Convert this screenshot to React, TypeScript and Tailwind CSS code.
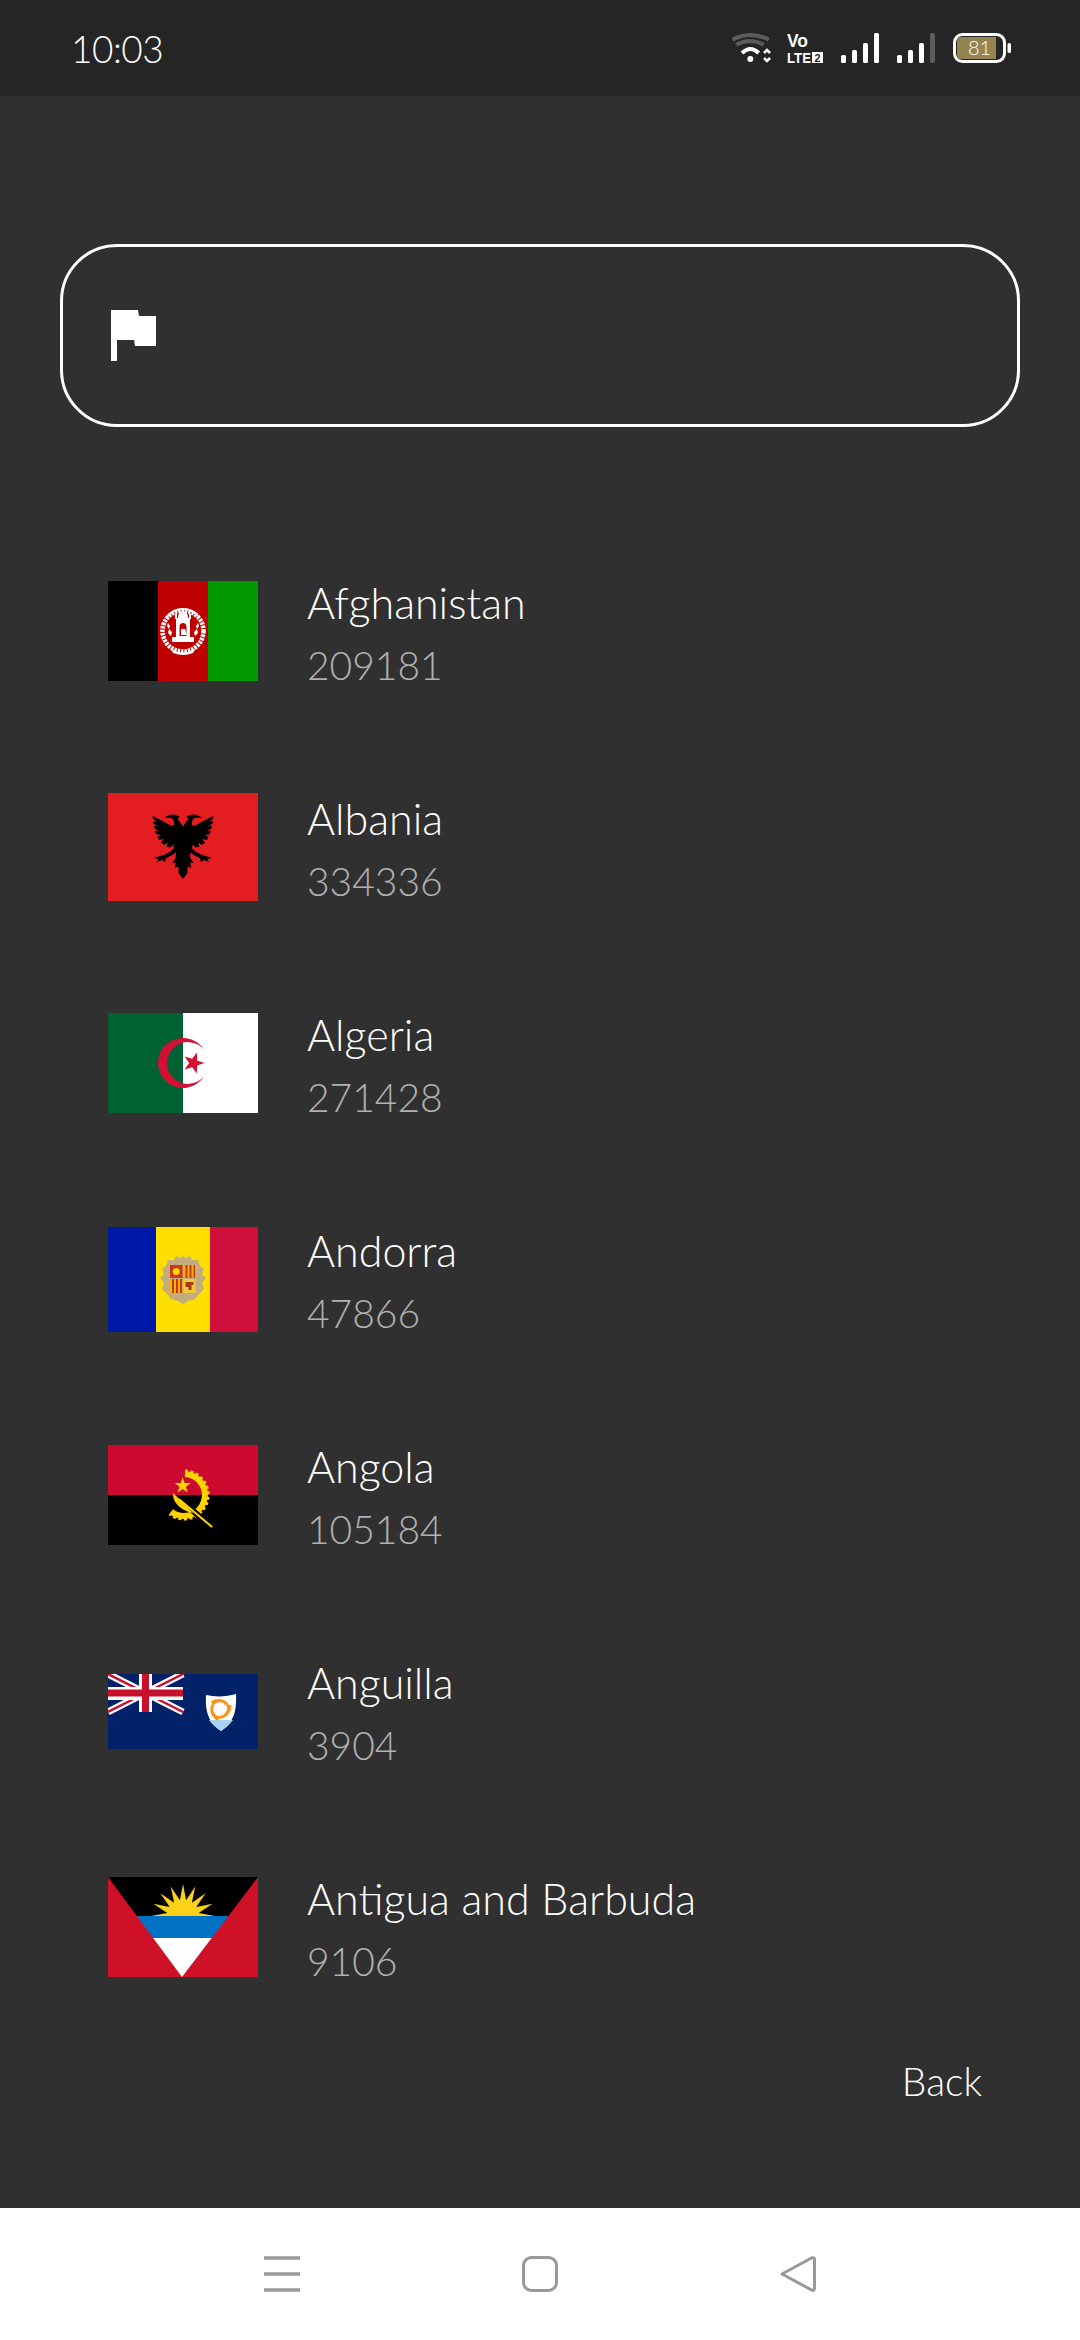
import type { ReactNode } from "react";

function starPoints(cx: number, cy: number, outer: number, inner: number, count: number, start = -90) {
  const pts: string[] = [];
  for (let i = 0; i < count * 2; i++) {
    const r = i % 2 === 0 ? outer : inner;
    const a = ((start + (i * 180) / count) * Math.PI) / 180;
    pts.push(`${(cx + r * Math.cos(a)).toFixed(2)},${(cy + r * Math.sin(a)).toFixed(2)}`);
  }
  return pts.join(" ");
}

function FlagSvg({ h, children }: { h: number; children: ReactNode }) {
  return (
    <svg width="150" height={h} viewBox={`0 0 150 ${h}`} className="block shrink-0">
      {children}
    </svg>
  );
}

function Afghanistan() {
  return (
    <FlagSvg h={100}>
      <rect width="50" height="100" fill="#000" />
      <rect x="50" width="50" height="100" fill="#be0000" />
      <rect x="100" width="50" height="100" fill="#009900" />
      {/* wreath */}
      <circle cx="75" cy="50" r="20.500" fill="none" stroke="#fff" strokeWidth="4.500" strokeDasharray="2.500 1" />
      <path d="M59 36A20 20 0 0 1 91 36" fill="none" stroke="#fff" strokeWidth="2" />
      <path d="M63 68Q75 75 87 68L85 72Q75 76 65 72Z" fill="#fff" />
      {/* mosque */}
      <path d="M68 37h14v19h4v5H64v-5h4z" fill="#fff" />
      <path d="M70 37C70 32 73 30 75 30C77 30 80 32 80 37Z" fill="#fff" />
      <path d="M67 33h2v5h-2zM81 33h2v5h-2z" fill="#fff" />
      <path d="M71.500 55V46C71.500 43 73 42 75 42C77 42 78.500 43 78.500 46V55Z" fill="#be0000" />
      <path d="M73 48h4l2 6h-6z" fill="#fff" />
      {/* wheat */}
      <path d="M60 42l2 3-1 3 3 3-1 4-3-3 1-4-2-3zM90 42l-2 3 1 3-3 3 1 4 3-3-1-4 2-3z" fill="#fff" />
    </FlagSvg>
  );
}

const eagleHalf =
  "M114 65C118 55 126 50 130 42L124 36C130 30 145 26 155 30L172 38L155 38C148 38 142 42 142 48L140 60L150 62L175 48L205 33L204 42L190 50L203 47L203 56L188 64L201 62L199 71L185 77L198 77L194 88L180 90L191 96L185 105L172 102L180 113L170 120L160 112L163 126L150 127L143 118L141 130L152 140L172 150L200 158L186 164L195 172L176 165L168 172L165 160L146 150L135 142L136 158L146 175L136 172L138 190L128 184L127 205L114 222Z";

function Albania() {
  return (
    <FlagSvg h={108}>
      <rect width="150" height="108" fill="#e41e20" />
      <g transform="translate(37 12) scale(0.3333)">
        <path d={eagleHalf} fill="#000" />
        <path d={eagleHalf} fill="#000" transform="matrix(-1 0 0 1 228 0)" />
      </g>
    </FlagSvg>
  );
}

function Algeria() {
  return (
    <FlagSvg h={100}>
      <rect width="75" height="100" fill="#006233" />
      <rect x="75" width="75" height="100" fill="#fff" />
      <path d="M96.300 37A25 25 0 1 0 96.300 63A20.900 20.900 0 1 1 96.300 37Z" fill="#d21034" />
      <polygon points={starPoints(85.500, 50, 11, 4.400, 5, 0)} fill="#d21034" />
    </FlagSvg>
  );
}

function Andorra() {
  return (
    <FlagSvg h={105}>
      <rect width="48" height="105" fill="#0018a8" />
      <rect x="48" width="54" height="105" fill="#fedf00" />
      <rect x="102" width="48" height="105" fill="#d0103a" />
      <path
        d="M60 33L66 33L68 29L72 31L75 29L78 31L82 29L84 33L90 33L92 39L96 42L94 47L98 51L94 56L96 62L91 67L87 72L80 74L75 77L70 74L63 72L59 67L54 62L56 56L52 51L56 47L54 42L58 39Z"
        fill="#c4ad7c"
      />
      <rect x="62" y="38" width="12.500" height="13" fill="#d0351f" />
      <circle cx="68.250" cy="44.500" r="3.500" fill="#fedf00" />
      <rect x="75.500" y="38" width="12" height="13" fill="#f2b705" />
      <path d="M77.500 38h2v13h-2zM81.500 38h2v13h-2zM85.500 38h1.500v13H85.500z" fill="#c8321f" />
      <rect x="62" y="52" width="12.500" height="14" fill="#f2b705" />
      <path d="M64 52h2v14h-2zM68 52h2v14h-2zM72 52h2v14h-2z" fill="#c8321f" />
      <rect x="75.500" y="52" width="12" height="14" fill="#f2c93c" />
      <path d="M77.500 55h8v3h-2v5h-3v-3h-3z" fill="#a83a1c" />
    </FlagSvg>
  );
}

function Angola() {
  return (
    <FlagSvg h={100}>
      <rect width="150" height="50" fill="#cc092f" />
      <rect y="50" width="150" height="50" fill="#000" />
      <path d="M77 29A21 21 0 1 1 63.200 66.700" fill="none" stroke="#ffd200" strokeWidth="6" />
      <path d="M77 26A24 24 0 1 1 61.500 69" fill="none" stroke="#ffd200" strokeWidth="3" strokeDasharray="3 2.500" />
      <polygon points={starPoints(74.700, 40.700, 8.500, 3.400, 5)} fill="#ffd200" />
      <path d="M72 55L103 81" stroke="#000" strokeWidth="6" />
      <path d="M65.300 47.700C63.700 55 70.300 65 85.300 68.300L72 54.300C69 52 67 50 65.300 47.700Z" fill="#ffd200" />
      <path d="M72 55L103.500 81.500" stroke="#ffd200" strokeWidth="2" strokeLinecap="round" />
    </FlagSvg>
  );
}

const dolphin = "M-9 -8C-2 -12 6 -10 9 -4L5 -5C1 -8 -4 -7 -6 -4L-6 0Z";

function Anguilla() {
  return (
    <FlagSvg h={75}>
      <rect width="150" height="75" fill="#012169" />
      <path d="M0 0L75 38M75 0L0 38" stroke="#fff" strokeWidth="7" />
      <path d="M0 0L37.500 19M75 38L37.500 19M75 0L37.500 19M0 38L37.500 19" stroke="#c8102e" strokeWidth="2.500" />
      <path d="M31 0h13v38H31zM0 13h75v13H0z" fill="#fff" />
      <path d="M34 0h7v38h-7zM0 15.500h75v7H0z" fill="#c8102e" />
      <path d="M98 21C107 23 118 23 128 20C128.500 33 128 47 113 57C98 47 97.500 33 98 21Z" fill="#fff" />
      <path d="M101 46H125C122 50 118 54 113 57C108 54 104 50 101 46Z" fill="#a8d3ee" />
      <g transform="translate(112 35)" fill="#f7941d">
        <path d={dolphin} />
        <path d={dolphin} transform="rotate(120)" />
        <path d={dolphin} transform="rotate(240)" />
      </g>
    </FlagSvg>
  );
}

function Antigua() {
  return (
    <FlagSvg h={100}>
      <rect width="150" height="100" fill="#ce1126" />
      <clipPath id="antigua-v">
        <polygon points="0,0 150,0 74,100" />
      </clipPath>
      <g clipPath="url(#antigua-v)">
        <rect width="150" height="39" fill="#000" />
        <clipPath id="antigua-sun">
          <rect width="150" height="39" />
        </clipPath>
        <polygon clipPath="url(#antigua-sun)" points={starPoints(75, 39, 32, 16, 16, 0)} fill="#fcd116" />
        <rect y="39" width="150" height="22" fill="#0072c6" />
        <rect y="61" width="150" height="39" fill="#fff" />
      </g>
    </FlagSvg>
  );
}

const countries = [
  { name: "Afghanistan", count: "209181", flag: <Afghanistan /> },
  { name: "Albania", count: "334336", flag: <Albania /> },
  { name: "Algeria", count: "271428", flag: <Algeria /> },
  { name: "Andorra", count: "47866", flag: <Andorra /> },
  { name: "Angola", count: "105184", flag: <Angola /> },
  { name: "Anguilla", count: "3904", flag: <Anguilla /> },
  { name: "Antigua and Barbuda", count: "9106", flag: <Antigua /> },
];

function StatusIcons() {
  return (
    <div className="flex items-center">
      {/* wifi */}
      <svg width="42" height="30" viewBox="0 0 42 30" className="block">
        <path d="M0.700 6.700Q18.300 -2.700 36.700 6.700" fill="none" stroke="#5c5c5c" strokeWidth="4" />
        <path d="M4.300 11.700Q18.300 4.300 31.700 11.700" fill="none" stroke="#5c5c5c" strokeWidth="4" />
        <path d="M10 20Q18.300 12 26.700 20" fill="none" stroke="#fff" strokeWidth="4" />
        <circle cx="18.300" cy="26" r="3" fill="#fff" />
        <path d="M32 20L35 17L38 20M32 25L35 28L38 25" fill="none" stroke="#fff" strokeWidth="2.500" />
      </svg>
      {/* VoLTE */}
      <svg width="36" height="38" viewBox="0 0 36 38" className="block ml-[13px]">
        <text x="0" y="18" fontFamily="Liberation Sans, sans-serif" fontWeight="700" fontSize="18" textLength="21" lengthAdjust="spacingAndGlyphs" fill="#fff">
          Vo
        </text>
        <text x="0" y="34" fontFamily="Liberation Sans, sans-serif" fontWeight="700" fontSize="15.500" textLength="24" lengthAdjust="spacingAndGlyphs" fill="#fff">
          LTE
        </text>
        <rect x="25" y="23" width="11" height="11" fill="#fff" />
        <text x="27.500" y="33" fontFamily="Liberation Sans, sans-serif" fontWeight="700" fontSize="11" fill="#252525">
          2
        </text>
      </svg>
      {/* signal 1 */}
      <svg width="39" height="30" viewBox="0 0 39 30" className="block ml-[18px]">
        <rect x="0" y="22" width="5" height="8" rx="1.500" fill="#fff" />
        <rect x="11" y="17" width="5" height="13" rx="1.500" fill="#fff" />
        <rect x="22" y="10" width="5" height="20" rx="1.500" fill="#fff" />
        <rect x="33" y="0" width="5" height="30" rx="1.500" fill="#fff" />
      </svg>
      {/* signal 2 */}
      <svg width="39" height="30" viewBox="0 0 39 30" className="block ml-[17px]">
        <rect x="0" y="22" width="5" height="8" rx="1.500" fill="#fff" />
        <rect x="11" y="17" width="5" height="13" rx="1.500" fill="#fff" />
        <rect x="22" y="10" width="5" height="20" rx="1.500" fill="#fff" />
        <rect x="33" y="0" width="5" height="30" rx="1.500" fill="#5c5c5c" />
      </svg>
      {/* battery */}
      <svg width="58" height="30" viewBox="0 0 58 30" className="block ml-[17px]">
        <rect x="1.500" y="1.500" width="50" height="27" rx="8" fill="none" stroke="#fff" strokeWidth="3" />
        <path d="M9 4H43V26H9C6 26 4 24 4 22V8C4 6 6 4 9 4Z" fill="#958450" />
        <rect x="54.500" y="10" width="3.500" height="10" rx="1.500" fill="#fff" />
        <text x="15" y="21.500" fontFamily="Lato, sans-serif" fontWeight="300" fontSize="20" fill="#fff">
          81
        </text>
      </svg>
    </div>
  );
}

export default function App() {
  return (
    <div className="flex h-[2340px] w-[1080px] flex-col overflow-hidden bg-[#303030] font-['Lato',sans-serif] text-white">
      {/* Status bar */}
      <div className="flex h-[96px] shrink-0 items-center justify-between bg-[#252525] pl-[71px] pr-[69px]">
        <span className="text-[37px] font-light leading-none tracking-[-0.5px]">10:03</span>
        <StatusIcons />
      </div>

      <main className="flex flex-1 flex-col">
        {/* Search field */}
        <div className="mx-[60px] mt-[148px] flex h-[183px] items-center rounded-[57px] border-[3px] border-white pl-[48px]">
          <svg width="45" height="51" viewBox="0 0 45 51" className="block">
            <path d="M0 0H27L28 6H45V36H24L23 30H6V51H0Z" fill="#fff" />
          </svg>
        </div>

        {/* Country list */}
        <div className="mt-[96px] flex flex-col">
          {countries.map((c) => (
            <div key={c.name} className="flex h-[216px] items-center gap-[49px] pl-[108px]">
              <div className="flex w-[150px] shrink-0 items-center">{c.flag}</div>
              <div className="flex flex-col pt-[6px]">
                <span className="text-[43px] font-light leading-[56px]">{c.name}</span>
                <span className="mt-[6px] text-[39px] font-light leading-[56px] text-[#b0b0b0]">{c.count}</span>
              </div>
            </div>
          ))}
        </div>

        <div className="pr-[98px] pt-[18px] text-right text-[39px] font-light leading-[56px]">Back</div>
      </main>

      {/* Navigation bar */}
      <div className="flex h-[132px] shrink-0 items-center justify-center gap-[222px] bg-white">
        <svg width="36" height="36" viewBox="0 0 36 36" className="block">
          <path d="M0 2H36M0 18H36M0 34H36" stroke="#999999" strokeWidth="3.500" />
        </svg>
        <svg width="36" height="36" viewBox="0 0 36 36" className="block">
          <rect x="1.500" y="1.500" width="33" height="33" rx="8" fill="none" stroke="#999999" strokeWidth="3" />
        </svg>
        <svg width="36" height="36" viewBox="0 0 36 36" className="block">
          <path d="M2 18L32 1.800Q34.500 1 34.500 4V32Q34.500 35 32 34.200L2 18Z" fill="none" stroke="#999999" strokeWidth="3" strokeLinejoin="round" />
        </svg>
      </div>
    </div>
  );
}
